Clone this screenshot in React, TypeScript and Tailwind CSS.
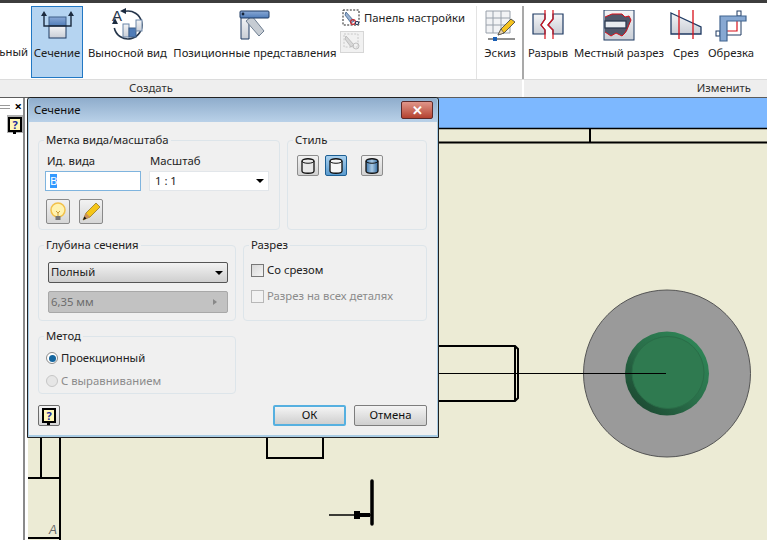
import type { ReactNode } from "react";

const navy = "#1f3a63";
const red = "#d8111b";

function Defs() {
  return (
    <svg width="0" height="0" className="absolute">
      <defs>
        <linearGradient id="steel" x1="0" y1="0" x2="0" y2="1">
          <stop offset="0" stopColor="#f4f5f7" />
          <stop offset="1" stopColor="#c9ced6" />
        </linearGradient>
        <linearGradient id="blueBar" x1="0" y1="0" x2="0" y2="1">
          <stop offset="0" stopColor="#8aa9d6" />
          <stop offset="1" stopColor="#4f7cb8" />
        </linearGradient>
        <linearGradient id="cyl" x1="0" y1="0" x2="1" y2="0">
          <stop offset="0" stopColor="#3f78ad" />
          <stop offset="0.5" stopColor="#a9c9e4" />
          <stop offset="1" stopColor="#2f689e" />
        </linearGradient>
        <linearGradient id="boss" x1="0" y1="1" x2="1" y2="0">
          <stop offset="0" stopColor="#183f2b" />
          <stop offset="0.5" stopColor="#2a6f4a" />
          <stop offset="1" stopColor="#2f8c5a" />
        </linearGradient>
      </defs>
    </svg>
  );
}

function SectionIcon() {
  return (
    <svg width="36" height="34" viewBox="0 0 36 34">
      <rect x="10" y="8" width="17" height="9" fill="url(#blueBar)" stroke="#3e5f88" />
      <rect x="10" y="17" width="17" height="12" fill="url(#steel)" stroke={navy} />
      <path d="M5 7V17H32V7" fill="none" stroke="#1c2b3f" strokeWidth="1.4" />
      <path d="M5 2L2 7H8ZM32 2L29 7H35Z" fill="#1c2b3f" />
    </svg>
  );
}

function DetailIcon() {
  return (
    <svg width="44" height="38" viewBox="0 0 44 38">
      <path d="M19 4.3A14 14 0 1 1 8.3 21" fill="none" stroke="#26364b" strokeWidth="1.6" />
      <path d="M14 4L20 1V7ZM9 11L6 17H12Z" fill="#1c2b3f" />
      <rect x="17" y="17" width="6" height="13" fill="url(#steel)" stroke="#6b86a8" />
      <rect x="23" y="21" width="7" height="9" fill="#4f7cb8" stroke="#3e5f88" />
      <rect x="30" y="13" width="6" height="11" fill="url(#steel)" stroke="#6b86a8" />
      <text x="6" y="14" fontSize="15" fill="#26364b" fontFamily="Liberation Sans, sans-serif">A</text>
    </svg>
  );
}

function PositionIcon() {
  return (
    <svg width="32" height="32" viewBox="1 1 32 32">
      <path d="M3 8H11V30H3Z" fill="url(#steel)" stroke={navy} />
      <path d="M8 12L14 7L26 22L21 27Z" fill="#c6ccd3" stroke="#6f7f92" />
      <rect x="2" y="2" width="29" height="7" rx="1" fill="url(#blueBar)" stroke={navy} />
      <circle cx="5" cy="5" r="1.4" fill="#16243a" />
    </svg>
  );
}

function PanelIcon() {
  return (
    <svg width="18" height="18" viewBox="0 0 18 18">
      <rect x="1" y="1" width="16" height="15" fill="none" stroke="#222" strokeDasharray="2 1.4" />
      <path d="M4 3L12 12L9 14L3 6Z" fill="#9ab3d3" stroke="#3e5f88" strokeWidth="0.8" />
      <circle cx="11" cy="13" r="2.4" fill="none" stroke="#c1272d" strokeWidth="1.2" />
      <circle cx="15" cy="14" r="1.6" fill="none" stroke="#1f3a63" />
    </svg>
  );
}

function DisabledPanelIcon() {
  return (
    <svg width="24" height="22" viewBox="0 0 24 22">
      <rect x="0.5" y="0.5" width="23" height="21" fill="#f1f1f1" stroke="#d6d6d6" />
      <rect x="4" y="3" width="14" height="13" fill="none" stroke="#c8c8c8" strokeDasharray="2 1.4" />
      <path d="M6 5L14 14L11 16L5 8Z" fill="#d8d8d8" stroke="#bdbdbd" />
      <circle cx="16" cy="15" r="3" fill="none" stroke="#c0c0c0" />
    </svg>
  );
}

function SketchIcon() {
  return (
    <svg width="32" height="34" viewBox="0 0 32 34">
      <path d="M2 2H26V24H2ZM2 9H26M2 16H26M9 2V24M17 2V24" fill="#f2f3f5" stroke="#98a0aa" />
      <path d="M14 26L17 20L27 10L31 13L20 24Z" fill="#f4c21f" stroke="#3b3b3b" strokeWidth="0.8" />
      <path d="M14 26L17 20L20 24Z" fill="#e8d3ae" stroke="#3b3b3b" strokeWidth="0.6" />
      <path d="M4 30H31" stroke="#222" />
      <rect x="9" y="28" width="4" height="4" fill="#1a5fb4" />
    </svg>
  );
}

function BreakIcon() {
  return (
    <svg width="32" height="32" viewBox="0 0 32 32">
      <path d="M1 4H13V9L9 15L13 20V24H1Z" fill="url(#steel)" stroke={navy} strokeWidth="1.2" />
      <path d="M31 4H21V9L16 15L21 20V24H31Z" fill="url(#steel)" stroke={navy} strokeWidth="1.2" />
      <path d="M13 0V9L9 15L13 20V29M21 0V9L16 15L21 20V29" fill="none" stroke={red} strokeWidth="1.2" />
    </svg>
  );
}

function LocalSectionIcon() {
  return (
    <svg width="32" height="32" viewBox="0 1 32 32">
      <rect x="1" y="1" width="30" height="30" fill="url(#steel)" stroke={navy} />
      <path d="M2 8L9 5H19L22 8L26 7L28 11L26 16L24 22L19 27L13 24L8 27L2 23Z" fill="#50576a" />
      <path d="M2 8L9 5H19L22 8L26 7L28 11L25 18L22 24L19 27L13 24L8 27L2 23" fill="none" stroke={red} />
      <rect x="2" y="12" width="21" height="7" fill="#e7ebf0" stroke="#2b3950" strokeWidth="1.3" />
    </svg>
  );
}

function SliceIcon() {
  return (
    <svg width="32" height="32" viewBox="0 0 32 32">
      <path d="M1 3L31 17V24H1Z" fill="url(#steel)" stroke={navy} strokeWidth="1.3" />
      <path d="M9 0V29M23 0V29" stroke={red} strokeWidth="1.3" />
    </svg>
  );
}

function CropIcon() {
  return (
    <svg width="32" height="36" viewBox="0 -2 32 36">
      <rect x="1" y="21" width="4" height="5" fill="#fff" stroke={navy} />
      <rect x="22" y="1" width="4" height="5" fill="#fff" stroke={navy} />
      <path d="M26 11V25H10" fill="none" stroke={navy} />
      <path d="M12 21H22V11" fill="none" stroke={red} strokeWidth="1.2" />
      <path d="M5 31V6H31V11H12V31Z" fill="#87a8d2" stroke="#41648f" strokeWidth="1.2" />
    </svg>
  );
}

function HelpIcon() {
  return (
    <span className="relative flex h-[15px] w-[14px] items-center justify-center border-2 border-black bg-[#fff7b8] text-[11px] font-bold leading-none text-[#1b2a9c]">
      ?
      <span className="absolute -bottom-[4px] left-[3px] h-[3px] w-[3px] bg-black" />
    </span>
  );
}

function RibbonTool({ w, label, children, active }: { w: string; label: string; children: ReactNode; active?: boolean }) {
  return (
    <div className={`flex shrink-0 flex-col items-center ${w} ${active ? "border border-[#2278c4] bg-[#b5d4f1]" : "border border-transparent"}`}>
      <div className="flex h-[38px] items-center justify-center">{children}</div>
      <span className="whitespace-nowrap leading-[16px]">{label}</span>
    </div>
  );
}

function Group({ title, className, children }: { title: string; className: string; children?: ReactNode }) {
  return (
    <div className={`relative shrink-0 rounded-[4px] border border-[#dde5ea] ${className}`}>
      <span className="absolute -top-[8px] left-[5px] bg-[#f0f0f0] px-[2px] leading-[14px]">{title}</span>
      {children}
    </div>
  );
}

function StyleButton({ fill, active }: { fill: string; active?: boolean }) {
  return (
    <div className={`flex h-[21px] w-[22px] items-center justify-center rounded-[2px] border ${active ? "border-[#1d5f93] bg-gradient-to-b from-[#a8d0ee] to-[#5a9bcf]" : "border-[#8d8d8d] bg-gradient-to-b from-[#f2f2f2] to-[#d2d2d2]"}`}>
      <svg width="14" height="16" viewBox="0 0 14 16">
        <path d="M1 3V13C1 16 13 16 13 13V3C13 0 1 0 1 3Z" fill={fill} stroke="#111" strokeWidth="1.3" />
        <path d="M1 3C1 6 13 6 13 3" fill="none" stroke="#111" />
      </svg>
    </div>
  );
}

function Drawing() {
  return (
    <svg width="739" height="442" viewBox="0 0 739 442" className="block">
      <rect width="739" height="442" fill="#ecebd5" />
      <rect width="739" height="30" fill="#7db8ff" />
      <g fill="none" stroke="#000">
        <path d="M0 30.5H739" strokeWidth="1.5" />
        <path d="M0 44.5H739" strokeWidth="2" />
        <path d="M562 30V44" strokeWidth="2" />
        <path d="M400 248H487L490 251V300L487 303H400M487 248V303" strokeWidth="2" />
        <path d="M239 330V360H295V339" strokeWidth="2" />
        <path d="M13 330V380M32 330V442M0 380H32M0 440H32" strokeWidth="2" />
        <path d="M344 383V426" strokeWidth="3.5" strokeLinecap="round" />
        <path d="M301 417H344" strokeWidth="1.5" />
      </g>
      <path d="M326 413H332V415H342V419H332V421H326Z" fill="#000" />
      <circle cx="639" cy="275.5" r="83.5" fill="#9a9a9a" stroke="#555" />
      <circle cx="639" cy="275.5" r="42" fill="url(#boss)" />
      <circle cx="640" cy="274.5" r="36" fill="#2f7a50" stroke="#2a6d48" />
      <path d="M410 275.5H638" stroke="#000" strokeWidth="1.2" />
      <text x="21" y="436" fontSize="12" fontStyle="italic" fill="#666" fontFamily="Liberation Sans, sans-serif">A</text>
    </svg>
  );
}

function Dialog() {
  return (
    <div className="absolute left-[27px] top-[97px] flex h-[341px] w-[412px] flex-col rounded-t-[3px] border-[1.5px] border-[#222] bg-[#a9cce4] px-[1px] pb-[2px]">
      <div className="flex h-[24px] shrink-0 items-center justify-between rounded-t-[3px] bg-gradient-to-b from-[#8fadcc] to-[#b9d1e8] pl-[5px] pr-[4px]">
        <span className="text-[#101010]">Сечение</span>
        <div className="flex h-[18px] w-[32px] items-center justify-center rounded-[2px] border border-[#5c2a2a] bg-gradient-to-b from-[#e0968a] to-[#b3412f] text-[13px] font-bold leading-none text-white">
          ✕
        </div>
      </div>
      <div className="flex min-h-0 flex-1 flex-col bg-[#f0f0f0] pl-[9px] pr-[9px] pt-[18px]">
        <div className="flex gap-[7px]">
          <Group title="Метка вида/масштаба" className="h-[90px] w-[242px]">
            <div className="flex gap-[8px] pl-[6px] pt-[13px]">
              <div className="flex w-[96px] flex-col gap-[3px]">
                <span className="pl-[2px] leading-[14px]">Ид. вида</span>
                <div className="flex h-[20px] items-center border border-[#7fb4de] bg-white pl-[4px]">
                  <span className="bg-[#3399ff] leading-[14px] text-white">B</span>
                </div>
              </div>
              <div className="flex w-[120px] flex-col gap-[3px]">
                <span className="pl-[1px] leading-[14px]">Масштаб</span>
                <div className="flex h-[20px] items-center justify-between border border-[#e2e6ea] bg-white pl-[5px] pr-[4px]">
                  <span>1 : 1</span>
                  <span className="h-0 w-0 border-x-[4px] border-t-[4px] border-x-transparent border-t-black" />
                </div>
              </div>
            </div>
            <div className="flex gap-[9px] pl-[7px] pt-[8px]">
              <div className="flex h-[25px] w-[24px] items-center justify-center rounded-[2px] border border-[#8a8a8a] bg-gradient-to-b from-[#f2f2f2] to-[#d6d6d6]">
                <svg width="16" height="20" viewBox="0 0 16 20">
                  <circle cx="8" cy="8" r="7" fill="#fff3b0" stroke="#f2c14a" strokeWidth="1.5" />
                  <path d="M6 9L8 11L10 9M8 11V14" fill="none" stroke="#c99a3a" />
                  <rect x="5.5" y="14" width="5" height="4" fill="#777" />
                </svg>
              </div>
              <div className="flex h-[25px] w-[24px] items-center justify-center rounded-[2px] border border-[#8a8a8a] bg-gradient-to-b from-[#f2f2f2] to-[#d6d6d6]">
                <svg width="20" height="20" viewBox="0 0 20 20">
                  <path d="M2 18L5 11L15 1L19 5L9 15Z" fill="#f5c518" stroke="#8a6d1a" strokeWidth="0.7" />
                  <path d="M2 18L5 11L9 15Z" fill="#c98f5a" />
                  <path d="M2 18L3.4 14.5L5.5 16.5Z" fill="#111" />
                </svg>
              </div>
            </div>
          </Group>
          <Group title="Стиль" className="h-[90px] w-[140px]">
            <div className="flex pl-[9px] pt-[14px]">
              <StyleButton fill="#e8e8e8" />
              <div className="ml-[6px] mr-[14px]">
                <StyleButton fill="#f6f6f6" active />
              </div>
              <StyleButton fill="url(#cyl)" />
            </div>
          </Group>
        </div>
        <div className="mt-[15px] flex gap-[7px]">
          <Group title="Глубина сечения" className="h-[76px] w-[198px]">
            <div className="flex flex-col gap-[8px] pl-[9px] pr-[7px] pt-[16px]">
              <div className="flex h-[21px] items-center justify-between rounded-[2px] border border-[#555] bg-gradient-to-b from-[#f2f2f2] to-[#cfcfcf] pl-[2px] pr-[4px]">
                <span>Полный</span>
                <span className="h-0 w-0 border-x-[4px] border-t-[4px] border-x-transparent border-t-black" />
              </div>
              <div className="flex h-[22px] items-center justify-between rounded-[2px] border border-[#a8a8a8] bg-[#c2c2c2] pl-[2px] pr-[10px] text-[#6d6d6d]">
                <span>6,35 мм</span>
                <span className="h-0 w-0 border-y-[3px] border-l-[4px] border-y-transparent border-l-[#888]" />
              </div>
            </div>
          </Group>
          <Group title="Разрез" className="h-[76px] w-[184px]">
            <div className="flex flex-col gap-[12px] pl-[7px] pt-[17px]">
              <div className="flex items-center gap-[3px]">
                <span className="h-[13px] w-[13px] border border-[#777] bg-gradient-to-br from-[#d8d8d8] to-[#f4f4f4]" />
                <span className="leading-[14px]">Со срезом</span>
              </div>
              <div className="flex items-center gap-[3px] text-[#8b8b8b]">
                <span className="h-[13px] w-[13px] border border-[#b8b8b8] bg-[#f2f2f2]" />
                <span className="leading-[14px]">Разрез на всех деталях</span>
              </div>
            </div>
          </Group>
        </div>
        <Group title="Метод" className="mt-[15px] h-[58px] w-[198px]">
          <div className="flex flex-col gap-[9px] pl-[7px] pt-[14px]">
            <div className="flex items-center gap-[3px]">
              <span className="flex h-[12px] w-[12px] items-center justify-center rounded-full border border-[#8a8a8a] bg-white">
                <span className="h-[7px] w-[7px] rounded-full bg-[#14669f]" />
              </span>
              <span className="leading-[14px]">Проекционный</span>
            </div>
            <div className="flex items-center gap-[3px] text-[#8b8b8b]">
              <span className="h-[12px] w-[12px] rounded-full border border-[#c6c6c6] bg-[#e6e6e6]" />
              <span className="leading-[14px]">С выравниванием</span>
            </div>
          </div>
        </Group>
        <div className="mt-[11px] flex items-center">
          <div className="flex h-[21px] w-[22px] items-center justify-center rounded-[2px] border border-[#6d6d6d] bg-gradient-to-b from-[#f5f5f5] to-[#d8d8d8]">
            <HelpIcon />
          </div>
          <div className="ml-auto mr-[1px] flex gap-[8px]">
            <div className="flex h-[21px] w-[73px] items-center justify-center rounded-[2px] border-2 border-[#56b0e0] bg-gradient-to-b from-[#f4f4f4] to-[#cfcfcf] text-[#101010]">ОК</div>
            <div className="flex h-[21px] w-[73px] items-center justify-center rounded-[2px] border border-[#7d7d7d] bg-gradient-to-b from-[#f4f4f4] to-[#cfcfcf] text-[#101010]">Отмена</div>
          </div>
        </div>
      </div>
    </div>
  );
}

export default function App() {
  return (
    <div className="relative flex h-[540px] w-[767px] flex-col overflow-hidden bg-white font-['Noto_Sans',sans-serif] text-[11.3px] text-[#222]">
      <Defs />
      <div className="h-[3px] shrink-0 bg-[#3d3d3d]" />
      <div className="flex h-[76px] shrink-0 items-start pt-[3px]">
        <div className="flex h-[72px] w-[29px] shrink-0 items-end justify-end pb-[18px] pr-[1px]">
          <span className="leading-[16px]">ьный</span>
        </div>
        <div className="ml-[2px]">
          <RibbonTool w="w-[52px] h-[72px]" label="Сечение" active>
            <SectionIcon />
          </RibbonTool>
        </div>
        <div className="ml-[3px]">
          <RibbonTool w="w-[83px]" label="Выносной вид">
            <DetailIcon />
          </RibbonTool>
        </div>
        <div className="ml-[3px]">
          <RibbonTool w="w-[166px]" label="Позиционные представления">
            <PositionIcon />
          </RibbonTool>
        </div>
        <div className="ml-[2px] flex w-[136px] shrink-0 flex-col pt-[3px]">
          <div className="flex items-center gap-[4px] pl-[2px]">
            <PanelIcon />
            <span className="whitespace-nowrap">Панель настройки</span>
          </div>
          <div className="mt-[4px]">
            <DisabledPanelIcon />
          </div>
        </div>
        <div className="h-[73px] w-[1px] shrink-0 bg-[#e3e3e3]" />
        <div className="ml-[5px]">
          <RibbonTool w="w-[36px]" label="Эскиз">
            <SketchIcon />
          </RibbonTool>
        </div>
        <div className="ml-[4px] h-[73px] w-[2px] shrink-0 bg-[#a9a9a9]" />
        <div className="ml-[2px]">
          <RibbonTool w="w-[44px]" label="Разрыв">
            <BreakIcon />
          </RibbonTool>
        </div>
        <div className="ml-[3px]">
          <RibbonTool w="w-[92px]" label="Местный разрез">
            <LocalSectionIcon />
          </RibbonTool>
        </div>
        <div className="ml-[6px]">
          <RibbonTool w="w-[30px]" label="Срез">
            <SliceIcon />
          </RibbonTool>
        </div>
        <div className="ml-[6px]">
          <RibbonTool w="w-[48px]" label="Обрезка">
            <CropIcon />
          </RibbonTool>
        </div>
      </div>
      <div className="flex h-[18px] shrink-0 border-t border-[#dcdcdc]">
        <div className="flex w-[522px] items-center justify-center bg-[#eeeeee] pr-[220px] text-[#333]">
          <span>Создать</span>
        </div>
        <div className="w-[2px] bg-white" />
        <div className="flex flex-1 items-center justify-end bg-[#eeeeee] pr-[16px] text-[#333]">Изменить</div>
      </div>
      <div className="h-[1px] shrink-0 bg-[#5c5c5c]" />
      <div className="flex min-h-0 flex-1">
        <div className="flex w-[23px] shrink-0 flex-col bg-white">
          <div className="flex h-[17px] items-center justify-between bg-white pr-[1px]">
            <span className="h-[4px] w-[10px] border-y border-[#9a9a9a]" />
            <span className="text-[13px] font-bold leading-none text-black">×</span>
          </div>
          <div className="ml-[7px] flex h-[18px] items-center justify-end bg-[#b0b0b0] pr-[1px]">
            <HelpIcon />
          </div>
        </div>
        <div className="w-[2px] shrink-0 bg-[#8a8a8a]" />
        <div className="w-[3px] shrink-0 bg-white" />
        <Drawing />
      </div>
      <Dialog />
    </div>
  );
}
